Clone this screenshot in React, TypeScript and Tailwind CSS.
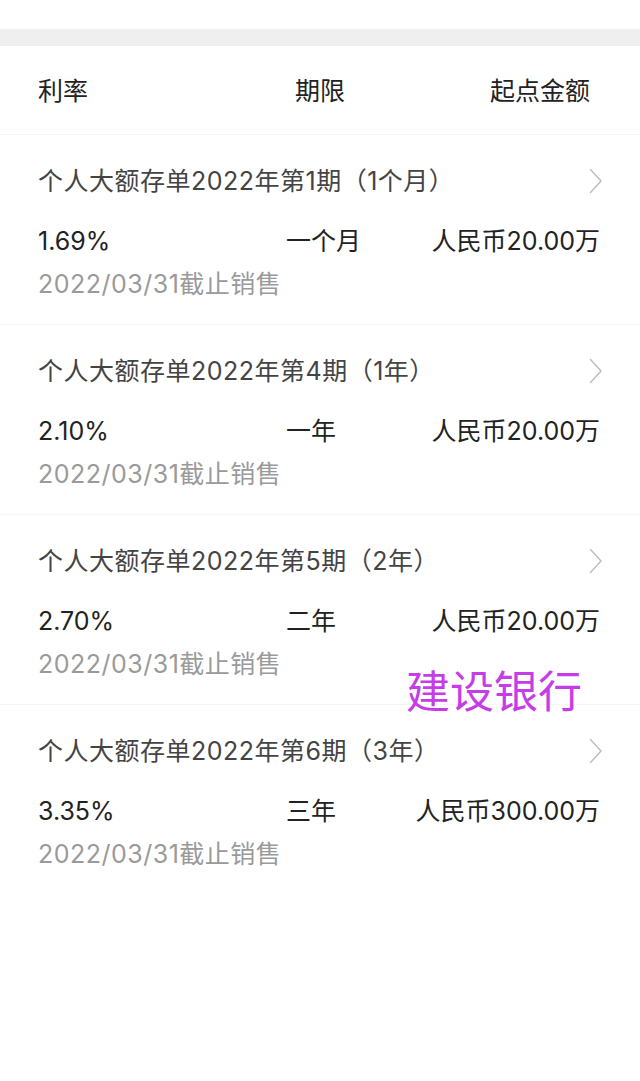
type Product = {
  name: string;
  rate: string;
  term: string;
  minimum: string;
  deadline: string;
};

const PRODUCTS: Product[] = [
  { name: "个人大额存单2022年第1期（1个月）", rate: "1.69%", term: "一个月", minimum: "人民币20.00万", deadline: "2022/03/31截止销售" },
  { name: "个人大额存单2022年第4期（1年）", rate: "2.10%", term: "一年", minimum: "人民币20.00万", deadline: "2022/03/31截止销售" },
  { name: "个人大额存单2022年第5期（2年）", rate: "2.70%", term: "二年", minimum: "人民币20.00万", deadline: "2022/03/31截止销售" },
  { name: "个人大额存单2022年第6期（3年）", rate: "3.35%", term: "三年", minimum: "人民币300.00万", deadline: "2022/03/31截止销售" },
];

const FONT = "font-['Inter','Noto_Sans_CJK_SC',sans-serif]";

export default function App() {
  return (
    <div className={`relative h-[1081px] w-[640px] overflow-hidden bg-white ${FONT}`}>
      <div className="h-[29px]" />
      <div className="h-[17px] bg-[#efefef]" />

      <div className="grid h-[89px] grid-cols-[257px_1fr_auto] items-center border-b border-[#f4f4f4] pt-[4px] pr-[50px] pl-[38px] text-[25px] text-[#222]">
        <span>利率</span>
        <span>期限</span>
        <span>起点金额</span>
      </div>

      {PRODUCTS.map((product, index) => (
        <ProductRow key={product.name} product={product} last={index === PRODUCTS.length - 1} />
      ))}

      <div className="absolute top-[664px] left-[406px] text-[44px] leading-[56px] text-[#c63ce6]">建设银行</div>
    </div>
  );
}

function Chevron() {
  return (
    <svg width="14" height="26" viewBox="0 0 14 26" fill="none" className="text-[#bcbcbc]">
      <polyline points="1.5,1.5 12,13 1.5,24.5" stroke="currentColor" strokeWidth="1.4" strokeLinecap="round" strokeLinejoin="round" />
    </svg>
  );
}

function ProductRow({ product, last }: { product: Product; last: boolean }) {
  return (
    <div className={`h-[190px] pt-[28px] pr-[40px] pl-[38px] ${last ? "" : "border-b border-[#f6f6f6]"}`}>
      <div className="flex h-[36px] items-center justify-between text-[25px] leading-[36px] tracking-[0.5px] text-[#444]">
        <span>{product.name}</span>
        <span className="mr-[-3px]">
          <Chevron />
        </span>
      </div>
      <div className="mt-[24px] grid h-[36px] grid-cols-[248px_1fr_auto] items-center text-[25px] leading-[36px] text-[#222]">
        <span>{product.rate}</span>
        <span>{product.term}</span>
        <span>{product.minimum}</span>
      </div>
      <div className="mt-[7px] h-[36px] text-[25px] leading-[36px] tracking-[0.5px] text-[#9a9a9a]">{product.deadline}</div>
    </div>
  );
}
